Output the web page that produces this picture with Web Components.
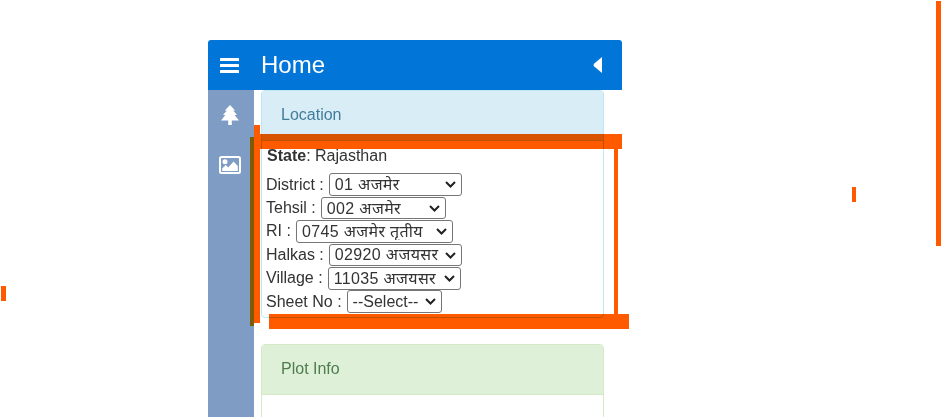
<!DOCTYPE html>
<html lang="en">
<head>
<meta charset="utf-8">
<title>Home</title>
<style>
  html, body { margin: 0; height: 417px; overflow: hidden; background: #fff; }
  body { font: 16px "Liberation Sans", "Noto Sans", sans-serif; color: #333; }
  #page { position: relative; height: 417px; padding: 40px 0 0 208px; box-sizing: border-box; }
</style>
</head>
<body>
<div id="page">
  <app-shell>
    <app-header slot="header" title="Home"></app-header>
    <side-rail slot="rail"></side-rail>
    <info-panel title="Location" kind="info">
      <div style="line-height:18px;margin:0 0 8px 1px"><b>State</b>: Rajasthan</div>
      <field-select label="District" width="133.5" value="01 अजमेर"></field-select>
      <field-select label="Tehsil" width="125.5" value="002 अजमेर"></field-select>
      <field-select label="RI" width="157.5" value="0745 अजमेर तृतीय"></field-select>
      <field-select label="Halkas" width="133.5" value="02920 अजयसर"></field-select>
      <field-select label="Village" width="133.5" value="11035 अजयसर"></field-select>
      <field-select label="Sheet No" width="95.5" value="--Select--"></field-select>
    </info-panel>
    <info-panel title="Plot Info" kind="success" style="margin-top:26px;height:120px"></info-panel>
  </app-shell>

  <!-- the pen marks drawn over the screenshot -->
  <pen-mark x="250" y="137" w="4" h="189" color="#7d5a04"></pen-mark>
  <pen-layer>
    <pen-mark x="254" y="134" w="368" h="15"></pen-mark>
    <pen-mark x="269" y="314" w="360" h="15"></pen-mark>
    <pen-mark x="613.5" y="149" w="4.5" h="165"></pen-mark>
    <pen-mark x="254" y="125" w="6" h="198"></pen-mark>
    <pen-mark x="936" y="1" w="4.5" h="245"></pen-mark>
    <pen-mark x="851.6" y="187" w="4.8" h="15"></pen-mark>
    <pen-mark x="1.3" y="286" w="4.7" h="15"></pen-mark>
  </pen-layer>
</div>

<script>
class AppShell extends HTMLElement {
  constructor() {
    super();
    this.attachShadow({ mode: 'open' });
    this.shadowRoot.innerHTML = `
      <style>
        :host { display: block; width: 414px; height: 377px; overflow: hidden; }
        .body { display: flex; height: 327px; }
        .main { width: 343px; margin-left: 7px; }
      </style>
      <slot name="header"></slot>
      <div class="body">
        <slot name="rail"></slot>
        <div class="main"><slot></slot></div>
      </div>`;
  }
}

class AppHeader extends HTMLElement {
  constructor() {
    super();
    this.attachShadow({ mode: 'open' });
  }
  connectedCallback() {
    this.shadowRoot.innerHTML = `
      <style>
        :host { display: flex; align-items: center; height: 50px; background: #0275d8; color: #fff; border-radius: 3px 3px 0 0; }
        .menu { display: block; margin-left: 12px; }
        .title { font-size: 24px; margin-left: 22px; flex: 1; }
        .back { display: block; margin-right: 20px; }
      </style>
      <svg class="menu" width="19" height="15" viewBox="0 0 19 15" fill="#fff">
        <rect y="0" width="19" height="3" rx=".6"/><rect y="6" width="19" height="3" rx=".6"/><rect y="12" width="19" height="3" rx=".6"/>
      </svg>
      <span class="title">${this.getAttribute('title')}</span>
      <svg class="back" width="9" height="16" viewBox="0 0 9 16" fill="#fff"><path d="M9 0V16L1 9.2Q0 8 1 6.8Z"/></svg>`;
  }
}

class SideRail extends HTMLElement {
  constructor() {
    super();
    this.attachShadow({ mode: 'open' });
    this.shadowRoot.innerHTML = `
      <style>
        :host { display: flex; flex-direction: column; align-items: center; width: 46px; flex: none; background: #7f9dc4; padding: 15px 3px 0 0; box-sizing: border-box; }
        svg { display: block; }
        .pic { margin-top: 31px; }
      </style>
      <svg width="18" height="20" viewBox="0 0 18 20" fill="#fff">
        <path d="M9 0L14.2 5.6H12.2L16 10H13.6L18 15.4H10.8V20H7.2V15.4H0L4.4 10H2L5.8 5.6H3.8Z"/>
      </svg>
      <svg class="pic" width="22" height="18" viewBox="0 0 22 18">
        <rect x="1" y="1" width="20" height="16" rx="1.5" fill="none" stroke="#fff" stroke-width="2"/>
        <circle cx="6" cy="5.8" r="2.5" fill="#fff"/>
        <path d="M3.2 15V12.4L6.8 9L9.2 11.4L14.6 5.6L18.8 10V15Z" fill="#fff"/>
      </svg>`;
  }
}

class InfoPanel extends HTMLElement {
  constructor() {
    super();
    this.attachShadow({ mode: 'open' });
  }
  connectedCallback() {
    const success = this.getAttribute('kind') === 'success';
    const border = success ? '#d6e9c6' : '#bce8f1';
    const bg = success ? '#dff0d8' : '#d9edf7';
    const color = success ? '#4f7d4e' : '#417d9b';
    this.shadowRoot.innerHTML = `
      <style>
        :host { display: block; box-sizing: border-box; height: 228px; border: 1px solid ${border}; border-radius: 4px; }
        .heading { height: 49px; line-height: 47px; padding-left: 19px; background: ${bg}; color: ${color}; border-radius: 3px 3px 0 0; border-bottom: 1px solid ${border}; }
        .content { padding: 6px 4px 0; }
      </style>
      <div class="heading">${this.getAttribute('title')}</div>
      <div class="content"><slot></slot></div>`;
  }
}

class FieldSelect extends HTMLElement {
  constructor() {
    super();
    this.attachShadow({ mode: 'open' });
  }
  connectedCallback() {
    const value = this.getAttribute('value');
    // the Hindi font of the reference runs a little wider
    const spacing = /[\u0900-\u097F]/.test(value) ? '.35px' : '0';
    this.shadowRoot.innerHTML = `
      <style>
        :host { display: flex; align-items: center; gap: 5px; height: 23.4px; white-space: nowrap; }
        .box { position: relative; display: block; }
        select { display: block; appearance: none; box-sizing: border-box; height: 22.5px; width: ${this.getAttribute('width')}px;
                 padding: 0 19px 0 5px; font: inherit; letter-spacing: ${spacing}; color: #333; background: #fff;
                 border: 1px solid #767676; border-radius: 3px; }
        svg { position: absolute; right: 6px; top: 8px; pointer-events: none; }
      </style>
      <span>${this.getAttribute('label')} :</span>
      <span class="box">
        <select><option>${value}</option></select>
        <svg width="11" height="7" viewBox="0 0 11 7" fill="none" stroke="#222" stroke-width="2"><path d="M1 1L5.5 5.5L10 1"/></svg>
      </span>`;
  }
}

class PenLayer extends HTMLElement {
  constructor() {
    super();
    this.attachShadow({ mode: 'open' });
    this.shadowRoot.innerHTML = `
      <style>
        :host { position: absolute; inset: 0; mix-blend-mode: multiply; pointer-events: none; }
      </style>
      <slot></slot>`;
  }
}

class PenMark extends HTMLElement {
  constructor() {
    super();
    this.attachShadow({ mode: 'open' });
  }
  connectedCallback() {
    const a = n => this.getAttribute(n);
    this.shadowRoot.innerHTML = `
      <style>
        :host { position: absolute; left: ${a('x')}px; top: ${a('y')}px; width: ${a('w')}px; height: ${a('h')}px;
                background: ${a('color') || '#ff5a00'}; }
      </style>`;
  }
}

customElements.define('app-shell', AppShell);
customElements.define('app-header', AppHeader);
customElements.define('side-rail', SideRail);
customElements.define('info-panel', InfoPanel);
customElements.define('field-select', FieldSelect);
customElements.define('pen-layer', PenLayer);
customElements.define('pen-mark', PenMark);
</script>
</body>
</html>
